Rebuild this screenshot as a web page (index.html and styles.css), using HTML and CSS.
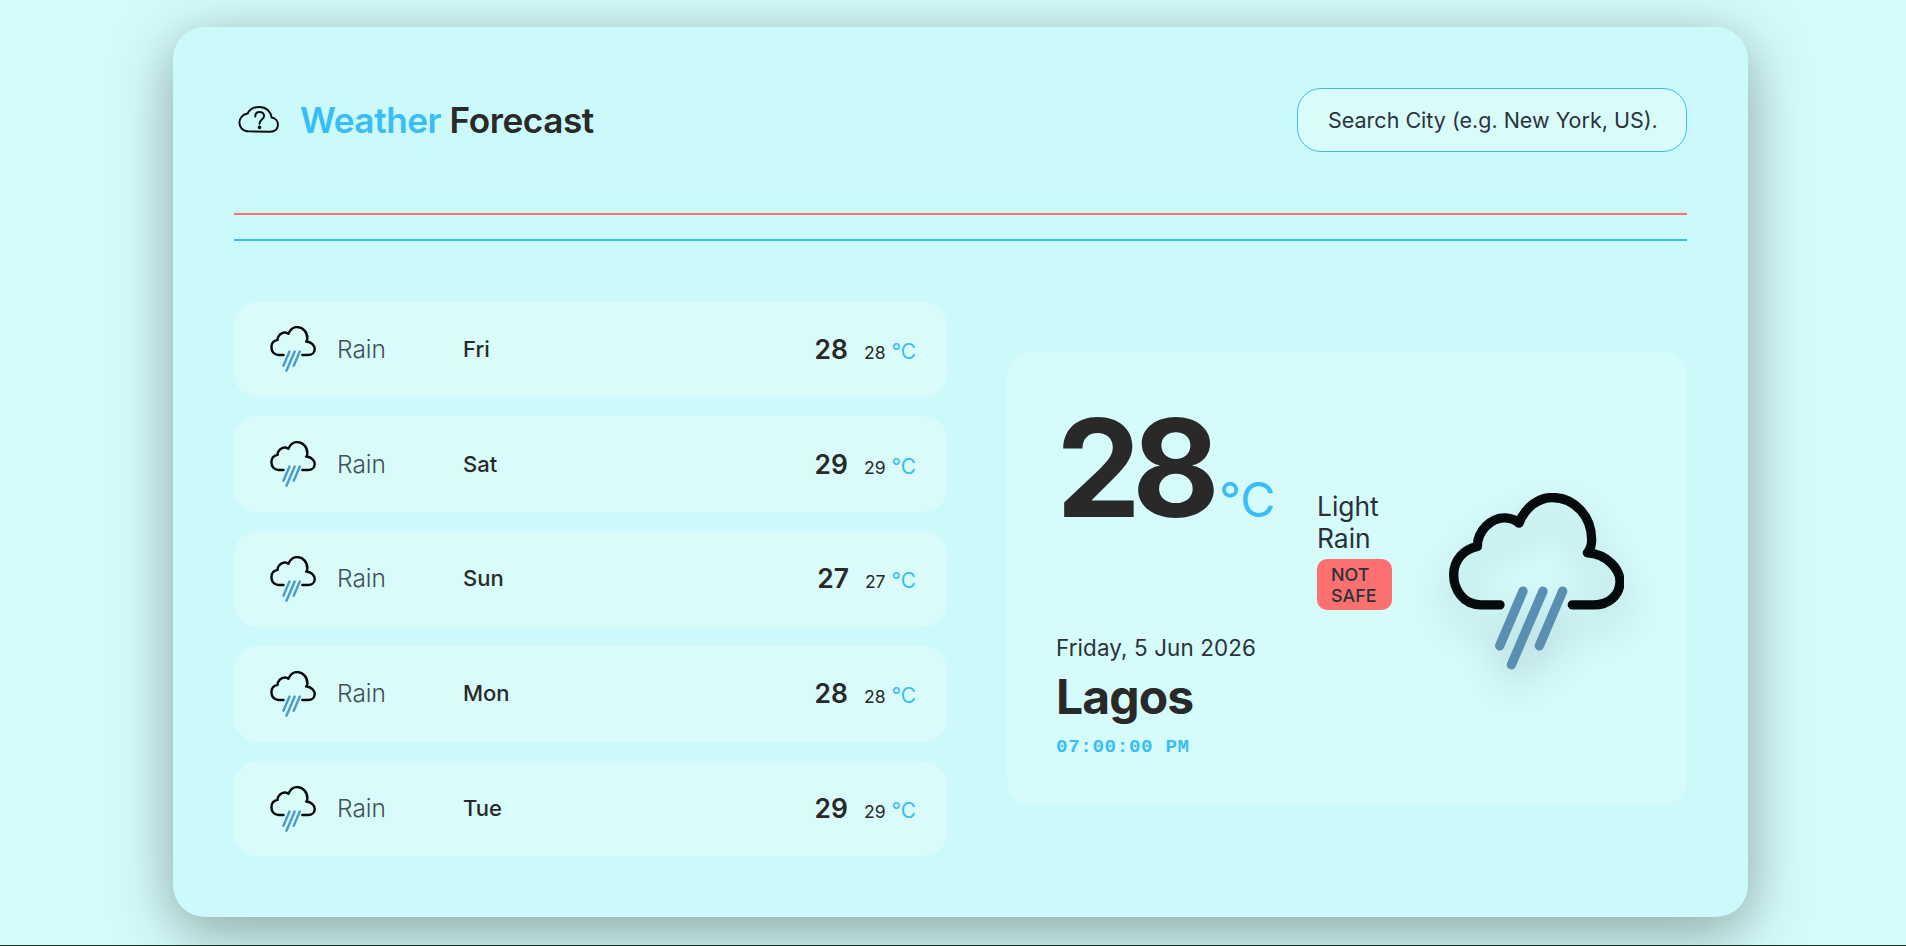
FILE: index.html
```html
<!DOCTYPE html>
<html lang="en">
<head>
<meta charset="utf-8">
<title>Weather Forecast</title>
<link rel="stylesheet" href="styles.css">
</head>
<body>
<svg class="defs" aria-hidden="true">
  <symbol id="rain-cloud" viewBox="445 100 525 530">
    <path class="cloud-line" d="M598 435H540C487 435 459 388 459 345C459 300 490 268 530 260C530 215 570 172 615 174C632 175 645 180 655 190C675 140 715 113 755 113C822 113 873 170 873 240C873 255 868 270 860 279C920 282 958 330 958 365C958 405 925 435 880 435H815"/>
    <path class="rain-line" d="M667 394L597 558M727 394L632 615M786 394L716 558"/>
  </symbol>
</svg>
<main class="card">
  <header class="top">
    <div class="brand">
      <svg class="brand-icon" viewBox="200 258 130 88" aria-hidden="true">
        <path d="M235 338C216 338 207 324 207 312C207 297 218 286 232 284C238 271 253 264 268 264C288 264 302 278 305 296C317 298 324 308 324 318C324 330 315 339 300 339Z"/>
        <path d="M255 293C255 284 261 279 268 279C276 279 282 284 282 291C282 301 268 302 268 315"/>
        <circle cx="268" cy="326" r="2.5"/>
      </svg>
      <h1 class="title"><span class="accent">Weather</span> Forecast</h1>
    </div>
    <input class="search" type="text" placeholder="Search City (e.g. New York, US).">
  </header>
  <hr class="rule rule-red">
  <hr class="rule rule-blue">
  <section class="content">
    <ul class="days">
      <li class="day">
        <svg class="day-icon"><use href="#rain-cloud"/></svg>
        <span class="day-cond">Rain</span>
        <span class="day-name">Fri</span>
        <span class="day-temp"><b class="max">28</b><span class="min">28</span><span class="unit">°C</span></span>
      </li>
      <li class="day">
        <svg class="day-icon"><use href="#rain-cloud"/></svg>
        <span class="day-cond">Rain</span>
        <span class="day-name">Sat</span>
        <span class="day-temp"><b class="max">29</b><span class="min">29</span><span class="unit">°C</span></span>
      </li>
      <li class="day">
        <svg class="day-icon"><use href="#rain-cloud"/></svg>
        <span class="day-cond">Rain</span>
        <span class="day-name">Sun</span>
        <span class="day-temp"><b class="max">27</b><span class="min">27</span><span class="unit">°C</span></span>
      </li>
      <li class="day">
        <svg class="day-icon"><use href="#rain-cloud"/></svg>
        <span class="day-cond">Rain</span>
        <span class="day-name">Mon</span>
        <span class="day-temp"><b class="max">28</b><span class="min">28</span><span class="unit">°C</span></span>
      </li>
      <li class="day">
        <svg class="day-icon"><use href="#rain-cloud"/></svg>
        <span class="day-cond">Rain</span>
        <span class="day-name">Tue</span>
        <span class="day-temp"><b class="max">29</b><span class="min">29</span><span class="unit">°C</span></span>
      </li>
    </ul>
    <article class="now">
      <div class="now-main">
        <div class="now-temp">28<span class="now-unit">°C</span></div>
        <div class="now-date">Friday, 5 Jun 2026</div>
        <div class="now-city">Lagos</div>
        <div class="now-time">07:00:00 PM</div>
      </div>
      <div class="now-cond">
        <div class="now-desc">Light Rain</div>
        <div class="badge">NOT SAFE</div>
      </div>
      <svg class="now-icon"><use href="#rain-cloud"/></svg>
    </article>
  </section>
</main>
</body>
</html>
```
FILE: styles.css
```css
* { box-sizing: border-box; }
html, body { margin: 0; padding: 0; }
body {
  height: 946px;
  overflow: hidden;
  background: #d4fbfa;
  border-bottom: 1px solid #1f2d2d;
  font-family: Inter, "Liberation Sans", sans-serif;
  color: #292929;
  padding-top: 27px;
  padding-left: 173px;
}
.defs { width: 0; height: 0; position: absolute; }
.cloud-line, .rain-line { fill: none; stroke-width: 28; stroke-linecap: round; stroke-linejoin: round; }
.cloud-line { stroke: #050a0c; }
.rain-line { stroke: currentColor; }

.card {
  width: 1575px;
  height: 890px;
  padding: 61px 61px;
  background: #ccf9f9;
  border-radius: 32px;
  box-shadow: 0 15px 60px rgba(0, 0, 0, .35);
}
.top { display: flex; align-items: center; justify-content: space-between; height: 64px; }
.brand { display: flex; align-items: center; gap: 20px; padding-left: 3px; }
.brand-icon { width: 43px; height: 29px; fill: none; stroke: #0a0f12; stroke-width: 6; stroke-linecap: round; stroke-linejoin: round; }
.brand-icon circle { fill: #0a0f12; }
.title { margin: 0; font-size: 35.2px; font-weight: 600; letter-spacing: -.45px; line-height: 1.2; }
.accent { color: #38bdf8; }
.search {
  width: 390px;
  height: 64px;
  padding: 0 20px 0 30px;
  border: 1px solid #38bdf8;
  border-radius: 24px;
  background: #d9fcfb;
  font: 400 21.5px Inter, "Liberation Sans", sans-serif;
  color: #29343c;
  outline: none;
}
.search::placeholder { color: #29343c; opacity: 1; }
.rule { margin: 0; border: 0; height: 2px; }
.rule-red { margin-top: 61px; background: #fc7070; }
.rule-blue { margin-top: 24px; background: #38bdf8; }

.content { display: flex; align-items: center; justify-content: space-between; margin-top: 60.6px; }
.days { list-style: none; margin: 0; padding: 0; width: 713px; display: flex; flex-direction: column; gap: 19.2px; }
.day {
  height: 95.6px;
  display: flex;
  align-items: center;
  padding: 0 31px 0 36px;
  background: #d9fcfb;
  border-radius: 24px;
}
.day-icon { width: 46px; height: 46px; color: #4a9cc9; flex: none; }
.day-cond { width: 126px; margin: 0 0 1px 21px; font-size: 24.5px; font-weight: 300; color: #3f5058; }
.day-name { margin-bottom: 1px; font-size: 22px; font-weight: 500; }
.day-temp { margin: 0 0 1px auto; display: flex; align-items: baseline; }
.max { font-size: 26.4px; font-weight: 600; }
.min { margin-left: 16px; font-size: 17.6px; }
.unit { margin-left: 6px; font-size: 20.8px; color: #38bdf8; }

.now {
  width: 680px;
  height: 453px;
  display: flex;
  align-items: flex-start;
  padding: 49px 0 0 49px;
  background: #d5fbfb;
  border-radius: 24px;
}
.now-main { width: 261px; flex: none; }
.now-temp { font-size: 135px; font-weight: 700; line-height: 1; letter-spacing: -9px; white-space: nowrap; }
.now-unit { font-size: 48px; font-weight: 400; color: #38bdf8; margin-left: 8px; letter-spacing: 0; }
.now-date { margin-top: 99px; font-size: 22.4px; letter-spacing: .12px; line-height: 1.2; color: #2b3338; }
.now-city { margin-top: 6px; font-size: 48px; font-weight: 700; letter-spacing: -.9px; line-height: 1.2; }
.now-time { margin-top: 10px; font: 700 19.2px/1.2 "Liberation Mono", monospace; letter-spacing: .64px; color: #38bdf8; }
.now-cond { width: 132px; flex: none; margin-top: 89px; }
.now-desc { width: 75px; font-size: 26.4px; line-height: 32px; color: #263238; }
.badge {
  width: 75px;
  margin-top: 5px;
  padding: 4.5px 14px;
  background: #fc7070;
  border-radius: 10px;
  font-size: 17.9px;
  font-weight: 500;
  line-height: 21px;
  color: #2a3338;
}
.now-icon {
  width: 175px;
  height: 177px;
  flex: none;
  margin-top: 92px;
  color: #5a8fb2;
  filter: drop-shadow(0 20px 20px rgba(0, 0, 0, .2));
}
```
